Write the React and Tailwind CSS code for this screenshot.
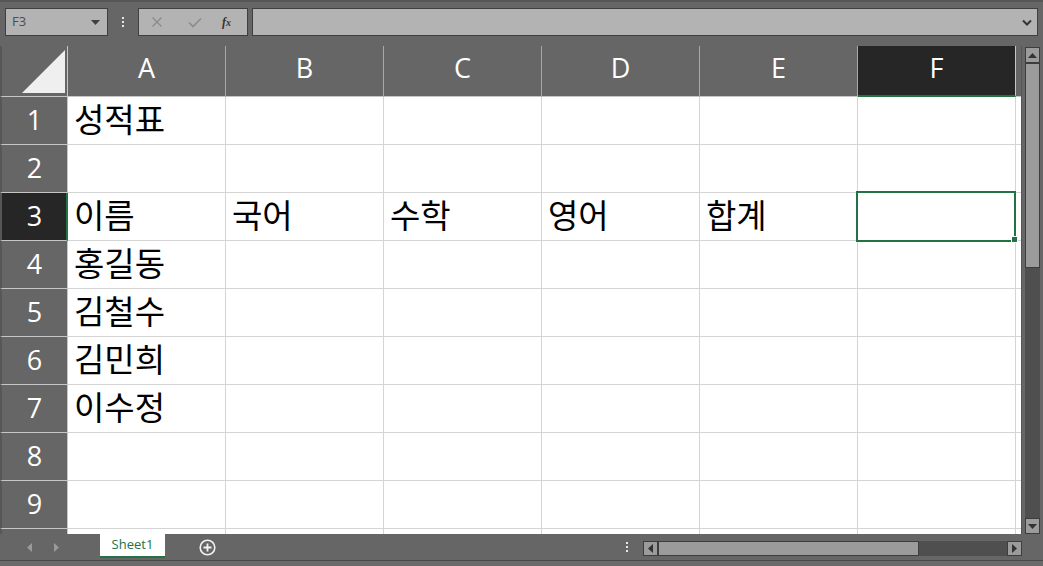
const cols = ["A", "B", "C", "D", "E", "F"];
const data = {
  1: ["성적표", "", "", "", "", ""],
  2: ["", "", "", "", "", ""],
  3: ["이름", "국어", "수학", "영어", "합계", ""],
  4: ["홍길동", "", "", "", "", ""],
  5: ["김철수", "", "", "", "", ""],
  6: ["김민희", "", "", "", "", ""],
  7: ["이수정", "", "", "", "", ""],
  8: ["", "", "", "", "", ""],
  9: ["", "", "", "", "", ""],
};

const ui = { fontFamily: '"Open Sans", "Noto Sans", sans-serif' };
const kr = { fontFamily: '"Noto Sans CJK KR", "Noto Sans", sans-serif' };

function FormulaBar() {
  return (
    <div className="flex h-[46px] items-start gap-0 border-t-2 border-[#575757] pt-[6px] pl-[5px] pr-[5px]">
      <div className="flex h-[28px] w-[103px] items-center justify-between border border-[#3f3f3f] bg-[#b3b3b3] pl-[6px] pr-[7px]">
        <span className="text-[13px] text-[#4d4d4d]" style={ui}>F3</span>
        <svg width="9" height="5" viewBox="0 0 9 5"><path d="M0 0h9L4.5 5z" fill="#404040" /></svg>
      </div>
      <div className="flex h-[28px] w-[30px] flex-col items-center justify-center gap-[2px]">
        <span className="h-[2px] w-[2px] bg-[#e6e6e6]" />
        <span className="h-[2px] w-[2px] bg-[#e6e6e6]" />
        <span className="h-[2px] w-[2px] bg-[#e6e6e6]" />
      </div>
      <div className="flex h-[28px] w-[110px] items-center border border-[#3f3f3f] bg-[#b3b3b3] pl-[12px]">
        <svg width="12" height="12" viewBox="0 0 12 12"><path d="M1.5 1.5l9 9M10.5 1.5l-9 9" stroke="#8c8c8c" strokeWidth="1.4" /></svg>
        <svg className="ml-[25px]" width="14" height="11" viewBox="0 0 14 11"><path d="M1 5.5l4 4L13 1.5" stroke="#8c8c8c" strokeWidth="1.6" fill="none" /></svg>
        <span className="ml-[20px] text-[12px] font-bold italic text-[#333]" style={{ fontFamily: '"Liberation Serif", serif' }}>f<span className="text-[10px]">x</span></span>
      </div>
      <div className="ml-[4px] flex h-[28px] flex-1 items-center justify-end border border-[#3f3f3f] bg-[#b3b3b3] pr-[5px]">
        <svg width="10" height="7" viewBox="0 0 10 7"><path d="M1 1.5l4 4 4-4" stroke="#333" strokeWidth="2" fill="none" /></svg>
      </div>
    </div>
  );
}

function Grid() {
  return (
    <div className="relative flex-1 overflow-hidden bg-white">
      <div className="grid grid-cols-[68px_repeat(6,158px)_1fr]">
        <div className="relative h-[51px] border-b border-l-2 border-r border-b-[#c6c6c6] border-l-[#575757] border-r-[#c6c6c6] bg-[#666666]">
          <svg className="absolute left-[20px] top-[4px]" width="43" height="43" viewBox="0 0 43 43"><path d="M43 0V43H0z" fill="#efefef" /></svg>
        </div>
        {cols.map((c) => (
          <div
            key={c}
            className={
              c === "F"
                ? "flex h-[51px] items-center justify-center border-b-2 border-r border-b-[#217346] border-r-[#c6c6c6] bg-[#262626] pb-[4px] text-[27px] text-white"
                : "flex h-[51px] items-center justify-center border-b border-r border-b-[#c6c6c6] border-r-[#a8a8a8] bg-[#666666] pb-[5px] text-[27px] text-white"
            }
            style={ui}
          >
            {c}
          </div>
        ))}
        <div className="h-[51px] border-b border-[#c6c6c6] bg-[#666666]" />
        {Object.entries(data).map(([r, vals]) => (
          <Row key={r} r={r} vals={vals} />
        ))}
        <div className="h-[10px] border-l-2 border-r border-l-[#575757] border-r-[#c6c6c6] bg-[#666666]" />
        {cols.map((c) => (
          <div key={c} className="h-[10px] border-r border-[#d4d4d4]" />
        ))}
        <div className="h-[10px]" />
      </div>
      <div className="absolute left-[856px] top-[145px] h-[51px] w-[160px] border-2 border-[#217346]" />
      <div className="absolute left-[1011px] top-[190px] h-[7px] w-[7px] border border-white bg-[#217346]" />
    </div>
  );
}

function Row({ r, vals }) {
  const sel = r === "3";
  return (
    <>
      <div
        className={
          sel
            ? "flex h-[48px] items-center justify-center border-b border-l-2 border-r-2 border-b-[#c6c6c6] border-l-[#575757] border-r-[#217346] bg-[#262626] pl-[1px] text-[27px] text-white"
            : "flex h-[48px] items-center justify-center border-b border-l-2 border-r border-b-[#c6c6c6] border-l-[#575757] border-r-[#c6c6c6] bg-[#666666] text-[27px] text-white"
        }
        style={ui}
      >
        {r}
      </div>
      {vals.map((v, i) => (
        <div
          key={i}
          className="flex h-[48px] items-center overflow-visible whitespace-nowrap border-b border-r border-[#d4d4d4] pb-[4px] pl-[6px] text-[33px] leading-none text-black"
          style={kr}
        >
          {v}
        </div>
      ))}
      <div className="h-[48px] border-b border-[#d4d4d4]" />
    </>
  );
}

function VScroll() {
  return (
    <div className="flex w-[22px] flex-col border-l border-[#555] bg-[#666666] pl-[3px] pr-[3px] pt-[1px] pb-[0px]">
      <div className="flex h-[16px] items-center justify-center border border-[#3d3d3d] bg-[#9b9b9b]">
        <svg width="9" height="5" viewBox="0 0 9 5"><path d="M4.5 0L9 5H0z" fill="#333" /></svg>
      </div>
      <div className="flex flex-1 flex-col bg-[#4f4f4f]">
        <div className="h-[205px] border border-[#3d3d3d] bg-[#9b9b9b]" />
      </div>
      <div className="flex h-[16px] items-center justify-center border border-[#3d3d3d] bg-[#9b9b9b]">
        <svg width="9" height="5" viewBox="0 0 9 5"><path d="M0 0h9L4.5 5z" fill="#333" /></svg>
      </div>
    </div>
  );
}

function BottomBar() {
  return (
    <div className="flex h-[26px] items-start">
      <div className="flex h-[26px] w-[100px] items-center pl-[27px]">
        <svg width="5" height="9" viewBox="0 0 5 9"><path d="M5 0v9L0 4.5z" fill="#9a9a9a" /></svg>
        <svg className="ml-[22px]" width="5" height="9" viewBox="0 0 5 9"><path d="M0 0v9l5-4.5z" fill="#9a9a9a" /></svg>
      </div>
      <div
        className="flex h-[24px] w-[65px] items-center justify-center border-b-2 border-[#217346] bg-white text-[13px] text-[#217346]"
        style={ui}
      >
        Sheet1
      </div>
      <div className="flex h-[26px] w-[84px] items-center justify-center">
        <svg width="17" height="17" viewBox="0 0 17 17">
          <circle cx="8.5" cy="8.5" r="7.3" stroke="#f2f2f2" strokeWidth="1.6" fill="none" />
          <path d="M8.5 4.5v8M4.5 8.5h8" stroke="#f2f2f2" strokeWidth="1.8" />
        </svg>
      </div>
      <div className="flex-1" />
      <div className="flex h-[26px] w-[20px] flex-col items-center justify-center gap-[2px]">
        <span className="h-[2px] w-[2px] bg-[#e6e6e6]" />
        <span className="h-[2px] w-[2px] bg-[#e6e6e6]" />
        <span className="h-[2px] w-[2px] bg-[#e6e6e6]" />
      </div>
      <div className="ml-[6px] mt-[7px] mr-[21px] flex h-[15px] w-[379px] bg-[#4f4f4f]">
        <div className="flex w-[15px] items-center justify-center border border-[#3d3d3d] bg-[#9b9b9b]">
          <svg width="5" height="9" viewBox="0 0 5 9"><path d="M5 0v9L0 4.5z" fill="#333" /></svg>
        </div>
        <div className="w-[261px] border border-[#3d3d3d] bg-[#9b9b9b]" />
        <div className="flex-1" />
        <div className="flex w-[15px] items-center justify-center border border-[#3d3d3d] bg-[#9b9b9b]">
          <svg width="5" height="9" viewBox="0 0 5 9"><path d="M0 0v9l5-4.5z" fill="#333" /></svg>
        </div>
      </div>
    </div>
  );
}

export default function App() {
  return (
    <div className="flex h-[566px] w-[1043px] flex-col overflow-hidden bg-[#666666]">
      <FormulaBar />
      <div className="flex h-[488px]">
        <Grid />
        <VScroll />
      </div>
      <BottomBar />
      <div className="h-[6px] border-t border-[#4a4a4a] bg-[#6b6b6b]" />
    </div>
  );
}
